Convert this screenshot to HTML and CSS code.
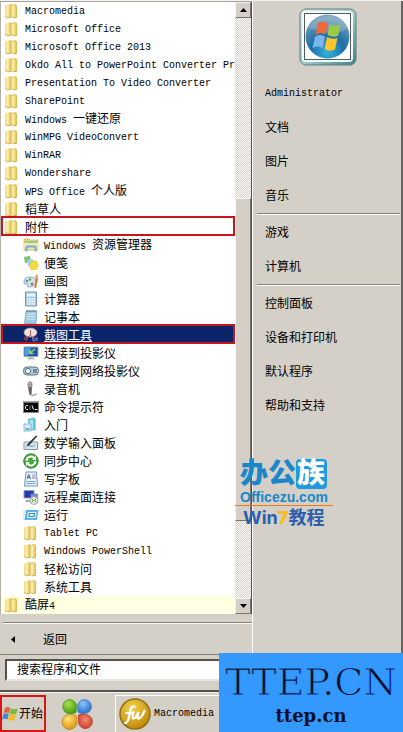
FILE: index.html
```html
<!DOCTYPE html>
<html lang="zh-CN">

<head>
    <meta charset="UTF-8">
    <meta name="viewport" content="width=device-width, initial-scale=1.0">
    <title>开始菜单</title>
    <link rel="stylesheet" href="styles.css">
</head>

<body>
    <!-- 图标 -->
    <svg class="defs" width="0" height="0" aria-hidden="true">
        <defs>
            <linearGradient id="gold" x1="0" x2="1" y1="0" y2="0">
                <stop offset="0" stop-color="#f0dc8c" />
                <stop offset=".4" stop-color="#fbeea8" />
                <stop offset="1" stop-color="#d2ae42" />
            </linearGradient>
            <radialGradient id="orb" cx=".5" cy=".85" r=".85">
                <stop offset="0" stop-color="#36b5dc" />
                <stop offset=".45" stop-color="#1c6ea8" />
                <stop offset="1" stop-color="#7fa6bd" />
            </radialGradient>
            <linearGradient id="frame" x1="0" x2="1" y1="0" y2="1">
                <stop offset="0" stop-color="#dfeeee" />
                <stop offset=".5" stop-color="#a5cccc" />
                <stop offset="1" stop-color="#3d8388" />
            </linearGradient>
            <radialGradient id="coin" cx=".4" cy=".3" r=".7">
                <stop offset="0" stop-color="#f4d24f" />
                <stop offset="1" stop-color="#c08a08" />
            </radialGradient>
            <radialGradient id="green" cx=".4" cy=".3" r=".7">
                <stop offset="0" stop-color="#a8e04a" />
                <stop offset="1" stop-color="#4a9f14" />
            </radialGradient>
            <radialGradient id="blue" cx=".4" cy=".3" r=".7">
                <stop offset="0" stop-color="#8cc4fa" />
                <stop offset="1" stop-color="#2b6fd0" />
            </radialGradient>
            <radialGradient id="red" cx=".5" cy=".4" r=".7">
                <stop offset="0" stop-color="#f58a72" />
                <stop offset="1" stop-color="#c8321f" />
            </radialGradient>
            <radialGradient id="yellow" cx=".4" cy=".3" r=".7">
                <stop offset="0" stop-color="#fde27a" />
                <stop offset="1" stop-color="#dd9612" />
            </radialGradient>
            <symbol id="i-folder" viewBox="0 0 16 16">
                <path d="M1 2.500 6 1l2 1v12l-4 1-3-1.500z" fill="url(#gold)" />
                <path d="M6.500 2.500 11 1l2 1.500V14l-3 1-3.500-1z" fill="#dcbc4e" />
                <path d="M7.500 3 10.500 2v12l-3-.5z" fill="#f9ebaa" />
                <path d="M11 2.500v11.500" stroke="#f3dd82" stroke-width="1.200" />
                <path d="M1 13.500l3 1.500 3-1M10 15l3-1" stroke="#c6a33e" stroke-width=".8" fill="none" />
            </symbol>
            <symbol id="i-flag" viewBox="0 0 16 16">
                <path d="M3 2q2.500-1.800 5.200 0L7 7.300Q4.300 5.600 1.500 7.300z" fill="#e8603a" />
                <path d="M8.700 2.500q3 1.500 7 0L14.200 7.700q-3.500 1.500-6.700 0z" fill="#7cb83c" />
                <path d="M1.200 8.200q2.800-1.700 5.600 0L5.400 13.500q-2.600-1.600-5.400 0z" fill="#4a86d4" />
                <path d="M7.300 8.600q3 1.500 6.700 0L12.500 13.900q-3.500 1.500-6.700 0z" fill="#f6bd25" />
            </symbol>
        </defs>
    </svg>

    <main class="start-menu">
        <section class="programs">
            <div class="program-box">
                <ul class="program-list">
                    <li><a href="#"><svg><use href="#i-folder" /></svg><span class="en">Macromedia</span></a></li>
                    <li><a href="#"><svg><use href="#i-folder" /></svg><span class="en">Microsoft Office</span></a></li>
                    <li><a href="#"><svg><use href="#i-folder" /></svg><span class="en">Microsoft Office 2013</span></a></li>
                    <li><a href="#"><svg><use href="#i-folder" /></svg><span class="en">Okdo All to PowerPoint Converter Pr</span></a></li>
                    <li><a href="#"><svg><use href="#i-folder" /></svg><span class="en">Presentation To Video Converter</span></a></li>
                    <li><a href="#"><svg><use href="#i-folder" /></svg><span class="en">SharePoint</span></a></li>
                    <li><a href="#"><svg><use href="#i-folder" /></svg><span><span class="en">Windows </span>一键还原</span></a></li>
                    <li><a href="#"><svg><use href="#i-folder" /></svg><span class="en">WinMPG VideoConvert</span></a></li>
                    <li><a href="#"><svg><use href="#i-folder" /></svg><span class="en">WinRAR</span></a></li>
                    <li><a href="#"><svg><use href="#i-folder" /></svg><span class="en">Wondershare</span></a></li>
                    <li><a href="#"><svg><use href="#i-folder" /></svg><span><span class="en">WPS Office </span>个人版</span></a></li>
                    <li><a href="#"><svg><use href="#i-folder" /></svg><span>稻草人</span></a></li>
                    <li class="marked"><a href="#"><svg><use href="#i-folder" /></svg><span>附件</span></a>
                        <ul class="sub-list">
                            <li><a href="#">
                                <svg viewBox="0 0 16 16"><path d="M1 2h5l1 1h8v10H1z" fill="#ecd27a" stroke="#c9a94c" stroke-width=".6" /><path d="M2 4h12v4H2z" fill="#8fce9c" /><path d="M1 6h14l-.5 6H1.500z" fill="#f8e9a6" /><path d="M3.500 14.500V10.500q0-1 1-1h7q1 0 1 1v4" fill="none" stroke="#67aee0" stroke-width="2" /></svg>
                                <span><span class="en">Windows </span>资源管理器</span></a></li>
                            <li><a href="#">
                                <svg viewBox="0 0 16 16"><path d="M1 2l6-1 1 6-6 1z" fill="#7cc36a" /><path d="M4 5l6-1 1 6-6 1z" fill="#a7d1ea" /><path d="M8 7l5-1.500 2.500 4.500-2 4.500-5 .5-2-4z" fill="#f2dc45" stroke="#d8bd2b" stroke-width=".5" /></svg>
                                <span>便笺</span></a></li>
                            <li><a href="#">
                                <svg viewBox="0 0 16 16"><path d="M1 9q0-5 6-5 6 0 6 5 0 5-7 5-2 0-1.500-2T2 11Q1 11 1 9z" fill="#cfe4f2" stroke="#7398b4" stroke-width=".8" /><circle cx="4" cy="8" r="1.200" fill="#3f7fd0" /><circle cx="7" cy="6.500" r="1.200" fill="#58a83e" /><circle cx="9" cy="11" r="1.300" fill="#d64a32" /><path d="M15 6l-2 9h-1.500L12.500 6z" fill="#d9782c" /><path d="M12.300 6l.2-4 1.700-1 .9 5z" fill="#e89b55" /></svg>
                                <span>画图</span></a></li>
                            <li><a href="#">
                                <svg viewBox="0 0 16 16"><path d="M2.500 1h11v14h-11z" fill="#a9cbe4" stroke="#6690b4" stroke-width=".9" /><path d="M4 2.500h8v3H4z" fill="#eaf5fd" /><path d="M4 8h8M4 10.500h8M4 13h8" stroke="#fff" stroke-width="1.500" stroke-dasharray="1.600 .6" /></svg>
                                <span>计算器</span></a></li>
                            <li><a href="#">
                                <svg viewBox="0 0 16 16"><path d="M3 2h11l-1 12.500H1.500z" fill="#9ccbe0" stroke="#6ba0bd" stroke-width=".7" /><path d="M4 5h8.500M3.800 7.500h8.500M3.500 10h8.500" stroke="#d5edf6" stroke-width=".9" /><path d="M4 3V1M6 3V1M8 3V1M10 3V1M12 3V1" stroke="#4b6878" stroke-width=".8" /></svg>
                                <span>记事本</span></a></li>
                            <li class="marked selected"><a href="#">
                                <svg viewBox="0 0 16 16"><ellipse cx="7.500" cy="5.500" rx="6.500" ry="4.500" fill="#efe3e0" stroke="#b98c88" stroke-width=".8" /><path d="M7.500 3v5M7.500 8l-4 3M7.500 8l3 4" stroke="#b3605c" stroke-width="1" /><circle cx="3" cy="11.500" r="1.500" fill="none" stroke="#d8504a" /><circle cx="11" cy="12.500" r="1.500" fill="none" stroke="#7fa5dc" /><path d="M14 10v4" stroke="#7fa5dc" /></svg>
                                <span>截图工具</span></a></li>
                            <li><a href="#">
                                <svg viewBox="0 0 16 16"><path d="M1 2h14v9.500H1z" fill="#1f55b8" stroke="#9aa3ad" /><path d="M2 3h6l-3 7.500H2z" fill="#46a3e8" /><path d="M12 4L7 8M7 5v3.500h3.500" stroke="#9be04a" stroke-width="1.500" fill="none" /><path d="M4 14.500h8l-2-2.500H6z" fill="#b5bcc4" /></svg>
                                <span>连接到投影仪</span></a></li>
                            <li><a href="#">
                                <svg viewBox="0 0 16 16"><rect x=".5" y="4" width="15" height="8" rx="3.500" fill="#b8cad8" stroke="#5b7284" /><circle cx="5" cy="8" r="2.600" fill="#fff" stroke="#47708f" /><path d="M10 7h4M10 9h4" stroke="#2d4a60" /></svg>
                                <span>连接到网络投影仪</span></a></li>
                            <li><a href="#">
                                <svg viewBox="0 0 16 16"><ellipse cx="7" cy="4" rx="2.500" ry="3.500" fill="#9b8d8b" /><path d="M5 6.500h4L8.500 14h-2z" fill="#6b5c5c" /><path d="M7.500 13q3 3 6-.5" fill="none" stroke="#a09a9a" stroke-width="1.200" /><path d="M6 2.500h2M6 4.500h2" stroke="#dcd3d1" stroke-width=".7" /></svg>
                                <span>录音机</span></a></li>
                            <li><a href="#">
                                <svg viewBox="0 0 16 16"><path d="M.5 2.500h15v11H.5z" fill="#080808" stroke="#888" /><path d="M1 3h14" stroke="#c8ccd2" /><path d="M5 6.500H3.500L2.500 7.500v2l1 1H5M7 7.500v1M7 9.500v1M9 6.500l1.500 4M12 10.500h2.500" fill="none" stroke="#fff" /></svg>
                                <span>命令提示符</span></a></li>
                            <li><a href="#">
                                <svg viewBox="0 0 16 16"><path d="M5 2l6-1.500 1.500 2V13L6 14z" fill="#4db8cc" /><path d="M6.500 3l4-1v10.500l-4 .5z" fill="#a7e2ec" /><path d="M1 7h7v7H1z" fill="#d8edf6" stroke="#7cb0c8" stroke-width=".8" /><path d="M2.500 12h4" stroke="#4a9ec0" stroke-width="1.500" /></svg>
                                <span>入门</span></a></li>
                            <li><a href="#">
                                <svg viewBox="0 0 16 16"><path d="M1 7h13.500v7.500H1z" fill="#d7e6f0" stroke="#7f9db2" /><path d="M3 12q2-3 4-1t5-1" stroke="#6c94ae" fill="none" /><path d="M14.500 1L6 10.500l-2 .5.500-2L13 .5z" fill="#2c3338" /></svg>
                                <span>数学输入面板</span></a></li>
                            <li><a href="#">
                                <svg viewBox="0 0 16 16"><circle cx="8" cy="8" r="7.300" fill="#43a63e" stroke="#2a7d2a" stroke-width=".8" /><path d="M3.500 8A4.500 4.500 0 0 1 11 4.700M12.500 8A4.500 4.500 0 0 1 5 11.300" fill="none" stroke="#fff" stroke-width="1.900" /><path d="M9 6.700L13 7V2.800zM7 9.300L3 9v4.200z" fill="#fff" /></svg>
                                <span>同步中心</span></a></li>
                            <li><a href="#">
                                <svg viewBox="0 0 16 16"><path d="M3 1h10.500l1 14H1.500z" fill="#e6f1fa" stroke="#6e94ba" /><path d="M4 8l1.700-4.500L7.500 8M4.700 6.500h2" stroke="#3263b0" fill="none" /><path d="M9 4h3.500M9 6h3.500M3.500 10.500h9M3.500 12.500h9" stroke="#7da6d2" /><path d="M9 7h3.500" stroke="#d97a6a" /></svg>
                                <span>写字板</span></a></li>
                            <li><a href="#">
                                <svg viewBox="0 0 16 16"><path d="M1 1.500h10V9H1z" fill="#2238b4" stroke="#8fa0c0" /><path d="M3 11h6l1 2H2z" fill="#a8b0ba" /><path d="M8 5h6.500v6H8z" fill="#6f8fdc" stroke="#7785a5" stroke-width=".7" /><circle cx="11" cy="11.500" r="4" fill="#e6ece6" stroke="#8a948a" stroke-width=".8" /><path d="M8.800 10l1.700 1.500-1.700 1.500M13.200 10l-1.700 1.500 1.700 1.500" fill="none" stroke="#3f9a34" /></svg>
                                <span>远程桌面连接</span></a></li>
                            <li><a href="#">
                                <svg viewBox="0 0 16 16"><path d="M3 3h12.500L14 13H1.500z" fill="#5fb2e4" /><path d="M5 5h8.500l-1 6H4z" fill="#dff1fc" /><path d="M6.500 6.500h5l-.5 3H6z" fill="none" stroke="#3b8fd0" stroke-width="1.200" /><path d="M0 5h3M0 8h2.500M0 11h2" stroke="#9fd0ee" /></svg>
                                <span>运行</span></a></li>
                            <li><a href="#"><svg><use href="#i-folder" /></svg><span class="en">Tablet PC</span></a></li>
                            <li><a href="#"><svg><use href="#i-folder" /></svg><span class="en">Windows PowerShell</span></a></li>
                            <li><a href="#"><svg><use href="#i-folder" /></svg><span>轻松访问</span></a></li>
                            <li><a href="#"><svg><use href="#i-folder" /></svg><span>系统工具</span></a></li>
                        </ul>
                    </li>
                    <li class="fresh"><a href="#"><svg><use href="#i-folder" /></svg><span>酷屏<span class="en">4</span></span></a></li>
                </ul>
                <div class="scrollbar">
                    <button class="scroll-btn" aria-label="向上滚动"><svg viewBox="0 0 7 4"><path d="M0 4L3.500 0 7 4z" /></svg></button>
                    <div class="scroll-before"></div>
                    <div class="scroll-thumb"></div>
                    <div class="scroll-after"></div>
                    <button class="scroll-btn" aria-label="向下滚动"><svg viewBox="0 0 7 4"><path d="M0 0h7L3.500 4z" /></svg></button>
                </div>
            </div>
            <button class="back"><svg viewBox="0 0 4 7"><path d="M4 0v7L0 3.500z" /></svg>返回</button>
            <div class="search">
                <input type="text" aria-label="搜索" placeholder="搜索程序和文件">
            </div>
        </section>

        <nav class="places">
            <svg class="avatar" viewBox="0 0 58 58">
                <rect x="1" y="1" width="56" height="56" rx="6" fill="url(#frame)" stroke="#5d7f82" />
                <rect x="3" y="3" width="51" height="51" rx="4" fill="#f2fafa" />
                <rect x="5.500" y="5.500" width="46" height="46" fill="#fff" stroke="#555c60" />
                <circle cx="28.500" cy="28.500" r="22" fill="url(#orb)" />
                <path d="M9 20Q17 8 29 8t20 12q-10 7-20 5T9 20z" fill="#fff" opacity=".2" />
                <path d="M19 15q5-3 10 0l-2.500 11.500q-5-3-10 0z" fill="#ec6a3e" />
                <path d="M30.500 16q5 3 11 .5L39 28q-5 2-10.500-1z" fill="#9ccc45" />
                <path d="M16 28.500q5-3 10 0L23.500 40q-5-3-10 0z" fill="#79b6ee" />
                <path d="M28 29q5 3 10.500 1L36 41.500q-5 2.500-10.500-.5z" fill="#fbc52e" />
            </svg>
            <ul>
                <li><a href="#" class="en">Administrator</a></li>
                <li><a href="#">文档</a></li>
                <li><a href="#">图片</a></li>
                <li><a href="#">音乐</a></li>
            </ul>
            <ul>
                <li><a href="#">游戏</a></li>
                <li><a href="#">计算机</a></li>
            </ul>
            <ul>
                <li><a href="#">控制面板</a></li>
                <li><a href="#">设备和打印机</a></li>
                <li><a href="#">默认程序</a></li>
                <li><a href="#">帮助和支持</a></li>
            </ul>
        </nav>
    </main>

    <footer class="taskbar">
        <button class="start-btn"><svg><use href="#i-flag" /></svg>开始</button>
        <button class="quick" aria-label="快速启动">
            <svg viewBox="0 0 32 32">
                <path d="M15 14q-1 1.500-5 1.500A7 7 0 1 1 15.500 7z" fill="url(#green)" stroke="#458d19" stroke-width=".7" />
                <path d="M16.500 9a7 7 0 1 1 8 6.500q-5 .5-7.500-1.500z" fill="url(#blue)" stroke="#3572bd" stroke-width=".7" />
                <path d="M15 17.500q1.500 3 1 6a7.500 7.500 0 1 1-8-7q4-.5 7 1z" fill="url(#yellow)" stroke="#b9801a" stroke-width=".7" />
                <path d="M17.500 17q3-1.500 7-.5a7 7 0 1 1-7 8z" fill="url(#red)" stroke="#a83a2a" stroke-width=".7" />
            </svg>
        </button>
        <button class="task">
            <svg viewBox="0 0 32 32">
                <circle cx="16" cy="16" r="15" fill="url(#coin)" stroke="#92700f" stroke-width="1.500" />
                <path d="M6 25q3 0 4-6l1.500-7q1-4 4-3.500M7.500 15h6M14.500 14l-1 5q0 3 3 .5l3-5.500-1 5q0 3 3 .5 3-3 4-7" fill="none" stroke="#fff" stroke-width="2.200" stroke-linecap="round" />
            </svg>
            <span class="en">Macromedia</span>
        </button>
    </footer>

    <!-- 水印 -->
    <div class="mark-office">
        <div class="mark-name">办公<span>族</span></div>
        <div class="mark-url">Officezu.com</div>
        <div class="mark-topic">Win<b>7</b>教程</div>
    </div>
    <div class="mark-ttep">
        <div class="ttep-big">TTEP.CN</div>
        <div class="ttep-small">ttep.cn</div>
    </div>
</body>

</html>
```
FILE: styles.css
```css
*,
*::after {
    box-sizing: border-box;
}

body {
    margin: 0;
    min-height: 100vh;
    display: flex;
    flex-direction: column;
    position: relative;
    overflow: hidden;
    background: #d4d0c8;
    color: #000;
    font-family: "Liberation Sans", "Noto Sans CJK SC", sans-serif;
    font-size: 12px;
    line-height: 18px;
}

ul {
    list-style: none;
    margin: 0;
    padding: 0;
}

a {
    color: inherit;
    text-decoration: none;
}

button,
input {
    font: inherit;
    color: inherit;
    border: none;
    border-radius: 0;
    background: none;
    margin: 0;
    padding: 0;
}

.defs {
    position: absolute;
}

/* 英文用等宽字体 */
.en {
    font-family: "Liberation Mono", monospace;
    font-size: 10px;
    white-space: pre;
}

.start-menu {
    flex: 1;
    display: grid;
    grid-template-columns: 252px 1fr;
    border-top: 1px solid #f4f2ee;
    border-bottom: 2px solid #55534f;
}

/* 左侧程序列表 */
.programs {
    display: flex;
    flex-direction: column;
}

.program-box {
    display: flex;
    border-top: 1px solid #a5a29b;
    border-left: 1px solid #b5b1a9;
}

.program-list {
    flex: 1;
    min-width: 0;
    background: #fff;
    overflow: hidden;
}

.program-list li {
    position: relative;
}

.program-list a {
    display: flex;
    align-items: center;
    gap: 5px;
    height: 18px;
    padding-left: 3px;
    white-space: nowrap;
    overflow: hidden;
}

.program-list a > span {
    padding-top: 2px;
}

.program-list svg {
    flex: none;
    width: 16px;
    height: 16px;
}

.program-list .sub-list a {
    padding-left: 22px;
}

.marked > a::after {
    content: "";
    position: absolute;
    top: -2px;
    left: 0;
    right: 0;
    height: 20px;
    border: 2px solid #c4161c;
    pointer-events: none;
}

.selected {
    background: #0a246a;
    color: #fff;
}

.selected span {
    text-decoration: underline;
}

.fresh {
    background: #ffffe1;
}

/* 滚动条 */
.scrollbar {
    width: 17px;
    display: flex;
    flex-direction: column;
    background: repeating-conic-gradient(#fff 0 25%, #d4d0c8 0 50%) 0 0 / 2px 2px;
    border-right: 1px solid #55534f;
}

.scroll-btn,
.scroll-thumb {
    background: #d4d0c8;
    border: 1px solid;
    border-color: #f4f2ee #77746e #77746e #f4f2ee;
}

.scroll-btn {
    height: 16px;
    display: flex;
    align-items: center;
    justify-content: center;
}

.scroll-btn svg {
    width: 7px;
    height: 4px;
}

.scroll-before {
    flex: 181;
}

.scroll-thumb {
    flex: 322;
}

.scroll-after {
    flex: 77;
}

.back {
    display: flex;
    align-items: center;
    gap: 28px;
    height: 32px;
    margin: 8px 0 0 3px;
    padding: 2px 0 0 8px;
    border-top: 1px solid #85827c;
    box-shadow: inset 0 1px #f8f7f4;
    text-align: left;
}

.back svg {
    width: 4px;
    height: 7px;
}

.search {
    border-top: 1px solid #85827c;
    padding: 4px 4px 9px 5px;
}

.search input {
    display: block;
    width: 100%;
    height: 22px;
    padding-left: 10px;
    background: #fff;
    border: 2px solid;
    border-color: #55534f #e8e5df #e8e5df #55534f;
}

.search input::placeholder {
    color: #000;
    opacity: 1;
}

/* 右侧链接 */
.places {
    border-left: 1px solid #fff;
    border-right: 2px solid #66635e;
    padding: 7px 1px 0 4px;
}

.avatar {
    display: block;
    width: 58px;
    height: 58px;
    margin: 0 auto 10px 42px;
}

.places a {
    display: block;
    padding-left: 8px;
    line-height: 36px;
    height: 34px;
}

.places ul + ul {
    margin-top: 1px;
    border-top: 1px solid #85827c;
    box-shadow: inset 0 1px #fff;
    padding-top: 1px;
}

/* 任务栏 */
.taskbar {
    display: flex;
    align-items: stretch;
    height: 40px;
    padding-top: 2px;
    border-top: 1px solid #f4f2ee;
}

.taskbar button {
    display: flex;
    align-items: center;
}

.taskbar .start-btn {
    width: 46px;
    gap: 1px;
    border: 2px solid #dc1414;
}

.start-btn svg {
    width: 16px;
    height: 16px;
    flex: none;
}

.quick svg,
.task svg {
    width: 32px;
    height: 32px;
    flex: none;
}

.taskbar .quick {
    width: 32px;
    margin: 0 22px 0 15px;
}

.taskbar .task {
    flex: 1;
    gap: 3px;
    padding-left: 3px;
    border-top: 1px solid #fff;
    border-left: 1px solid #fff;
}

/* 水印 */
.mark-office {
    position: absolute;
    top: 459px;
    left: 235px;
    width: 98px;
    color: #1b87c9;
    font-weight: 900;
    white-space: nowrap;
}

.mark-name {
    display: flex;
    padding-left: 5px;
    font-size: 28px;
    line-height: 30px;
}

.mark-name span {
    width: 31px;
    padding-left: 1px;
    border-radius: 4px;
    background: #1e9be0;
    color: #fff;
}

.mark-url {
    padding-left: 5px;
    font-size: 14px;
    font-weight: 700;
    line-height: 16px;
}

.mark-topic {
    padding-left: 8px;
    border-top: 1px solid #f07818;
    color: #2b5fae;
    font-family: Inter, "Noto Sans CJK SC", sans-serif;
    font-size: 18px;
    font-weight: 700;
    line-height: 24px;
}

.mark-topic b {
    color: #f9bc1c;
}

.mark-ttep {
    position: absolute;
    right: 0;
    bottom: 0;
    width: 184px;
    height: 79px;
    padding-top: 7px;
    background: #3399ff;
    color: #041024;
    font-family: "DejaVu Serif", serif;
    text-align: center;
    white-space: nowrap;
}

.ttep-big {
    font-size: 38px;
    line-height: 45px;
    -webkit-text-stroke: 1px #3399ff;
}

.ttep-small {
    font-size: 18px;
    font-weight: 700;
    line-height: 22px;
}
```
